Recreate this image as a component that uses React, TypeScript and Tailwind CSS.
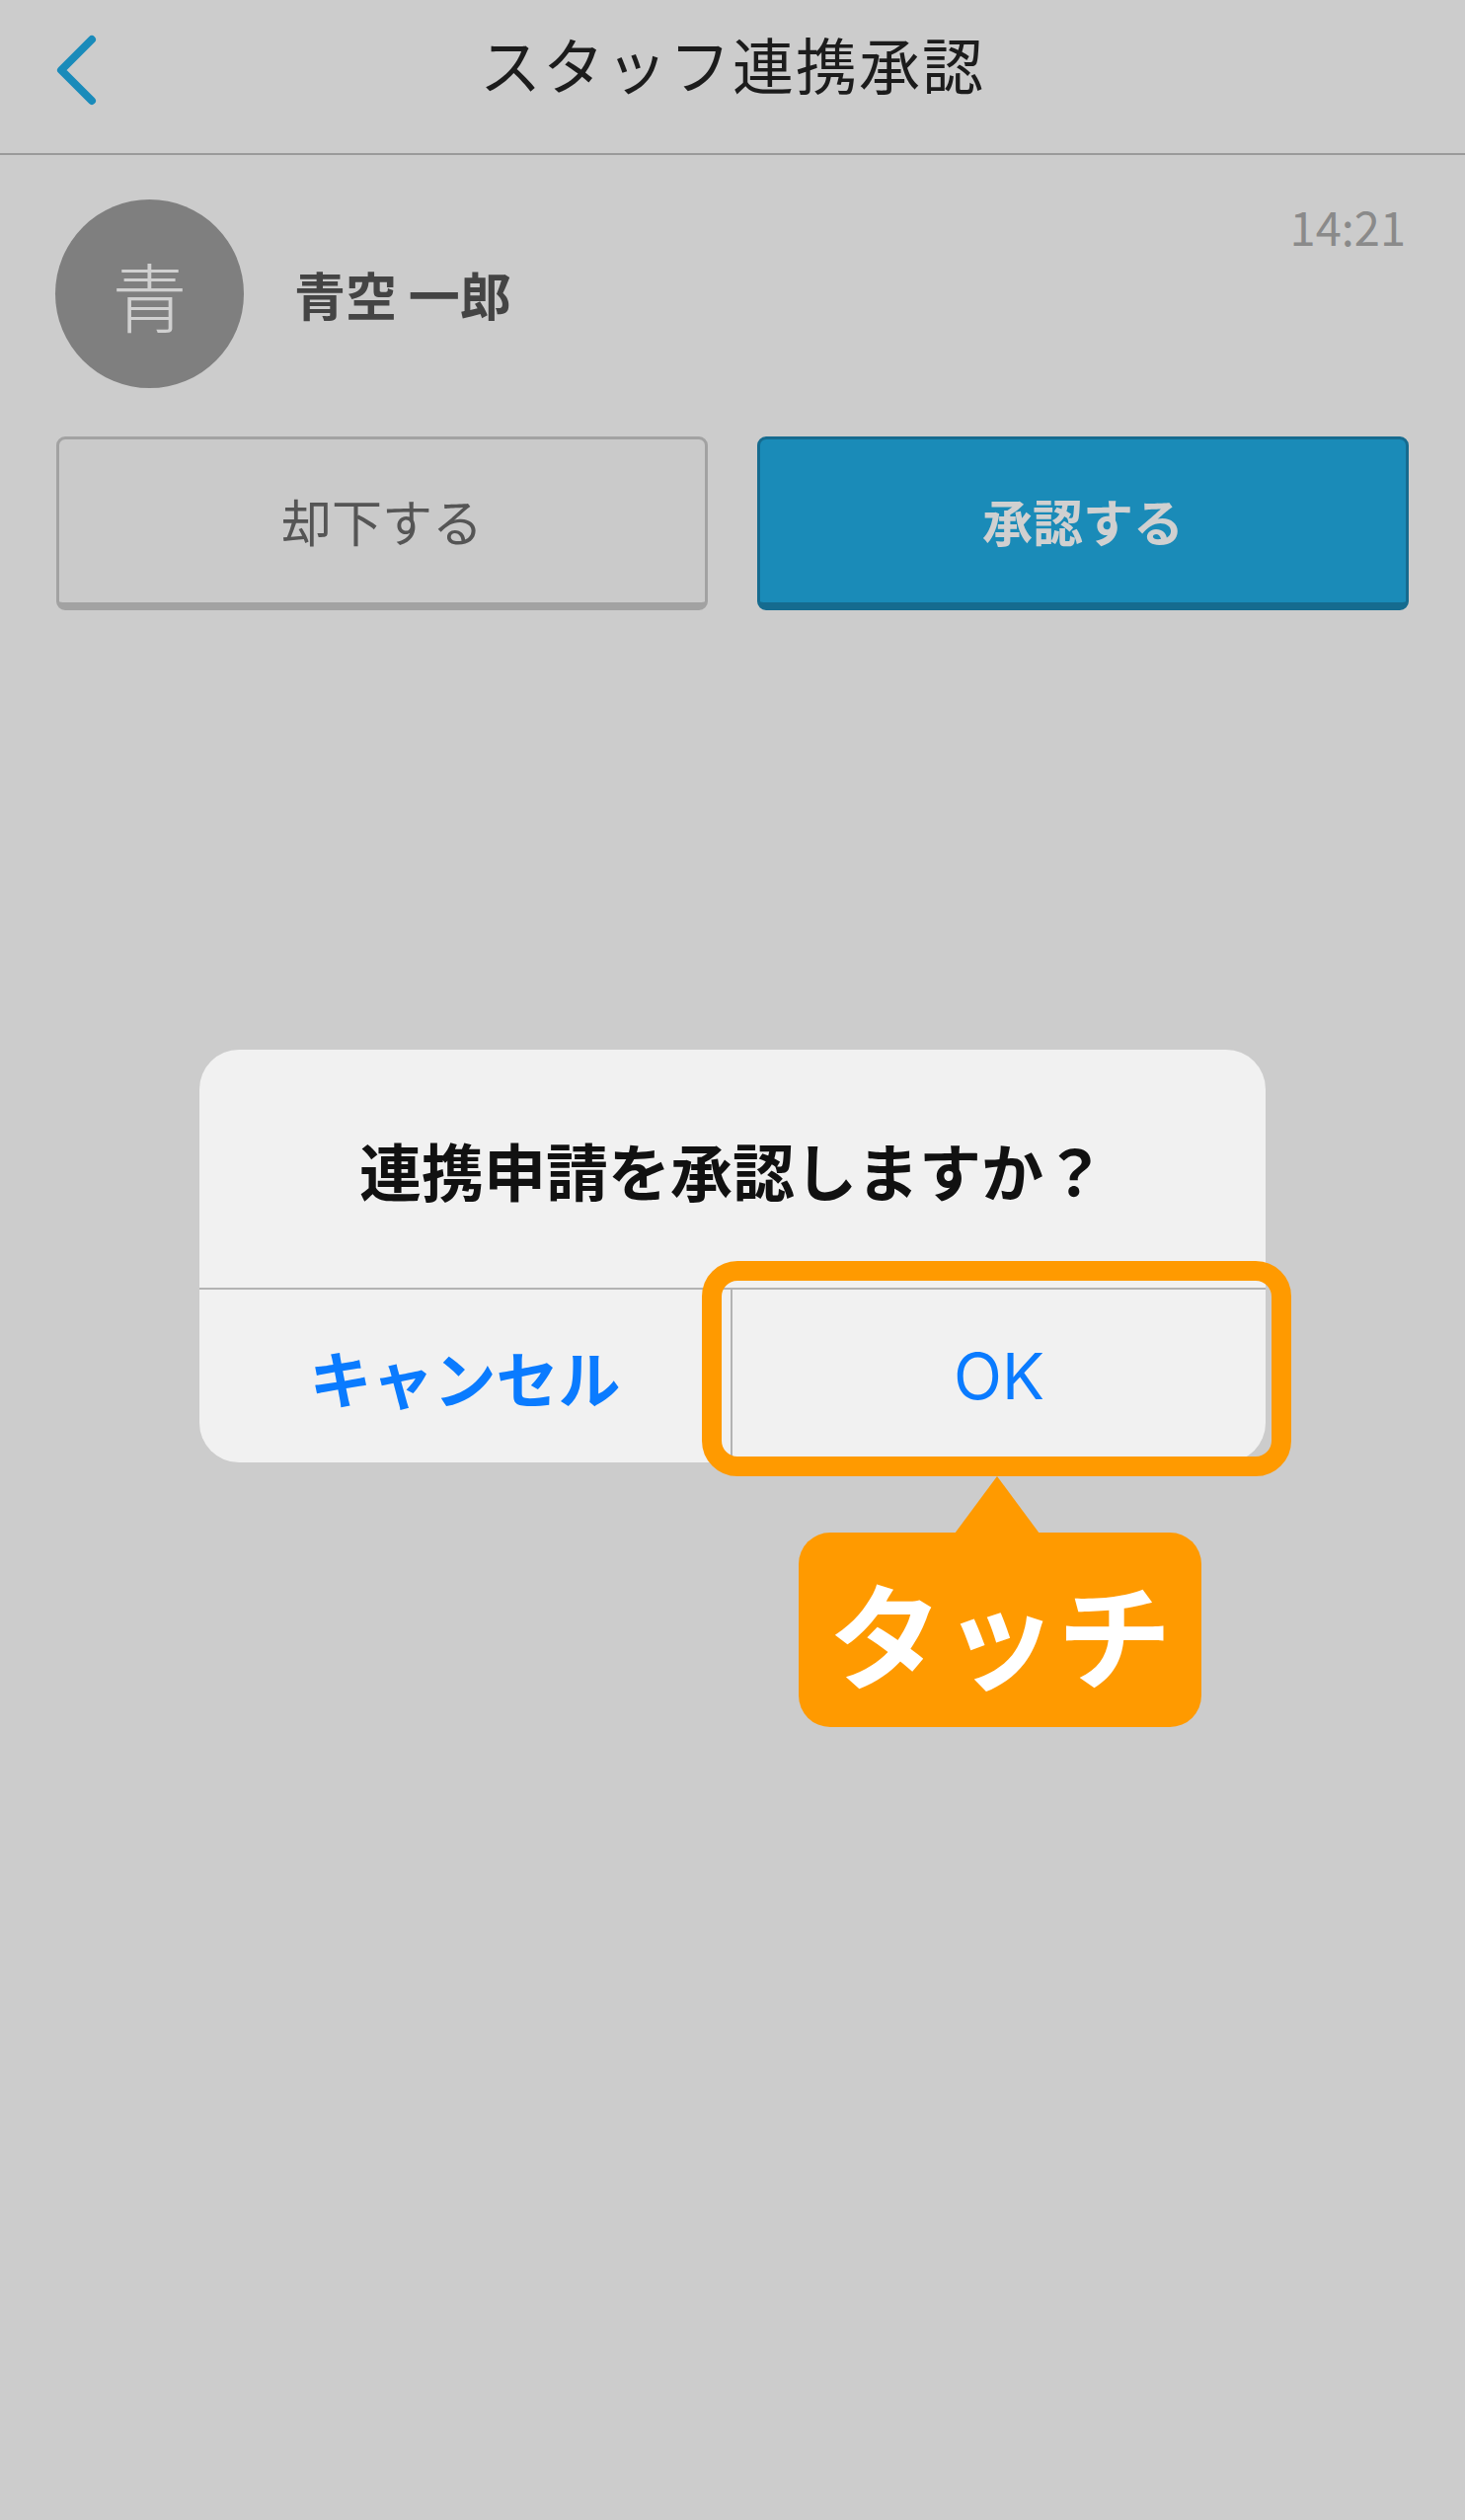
const jp = { fontFamily: '"Noto Sans CJK JP", "Noto Sans", sans-serif' };

function BackChevron() {
  return (
    <svg width="60" height="90" viewBox="0 0 60 90" className="block">
      <polyline
        points="53,17 22,48 53,79"
        fill="none"
        stroke="#1a8bba"
        strokeWidth="8"
        strokeLinecap="round"
        strokeLinejoin="round"
      />
    </svg>
  );
}

function Header() {
  return (
    <div className="h-[157px] border-b-2 border-[#9a9a9a]">
      <div className="grid h-[128px] grid-cols-[1fr_auto_1fr] items-center">
        <div className="pl-[40px] pt-[8px]">
          <BackChevron />
        </div>
        <h1 className="text-[62px] leading-none font-normal text-[#1c1c1c] tracking-[2px]">
          スタッフ連携承認
        </h1>
        <div />
      </div>
    </div>
  );
}

function StaffRow() {
  return (
    <div className="flex items-start pl-[56px] pr-[60px] pt-[45px]">
      <div className="flex h-[191px] w-[191px] shrink-0 items-center justify-center rounded-full bg-[#7f7f7f]">
        <span className="text-[76px] leading-none font-light text-[#d0d0d0]">青</span>
      </div>
      <div className="ml-[51px] flex h-[191px] items-center">
        <span className="text-[52px] leading-none font-bold text-[#444444]">青空 一郎</span>
      </div>
      <span className="ml-auto mt-[3px] text-[47px] leading-none text-[#8a8a8a]">14:21</span>
    </div>
  );
}

function ActionButtons() {
  return (
    <div className="mt-[49px] grid grid-cols-2 gap-[50px] px-[57px]">
      <button className="flex h-[176px] items-center justify-center rounded-[9px] border-[3px] border-b-[8px] border-[#a2a2a2] bg-[#cacaca] text-[51px] leading-none text-[#555555]">
        却下する
      </button>
      <button className="flex h-[176px] items-center justify-center rounded-[9px] border-[3px] border-b-[8px] border-[#156b8f] bg-[#1a8bb8] text-[51px] leading-none font-bold text-[#d0d0d0]">
        承認する
      </button>
    </div>
  );
}

function ConfirmDialog() {
  return (
    <div className="absolute left-[202px] top-[1063px] w-[1080px]">
      <div className="overflow-hidden rounded-[40px] bg-[#f1f1f1]">
        <div className="flex h-[241px] items-center justify-center">
          <p className="text-[63px] leading-none font-bold text-[#111111]">連携申請を承認しますか？</p>
        </div>
        <div className="grid h-[177px] grid-cols-2 border-t-2 border-[#b3b3b3]">
          <div className="flex items-center justify-center border-r-2 border-[#b3b3b3]">
            <span className="text-[63px] leading-none font-bold text-[#0a7bff]">キャンセル</span>
          </div>
          <div className="flex items-center justify-center">
            <span
              className="text-[64px] leading-none text-[#0a7bff]"
              style={{ fontFamily: 'Inter, "Noto Sans", sans-serif' }}
            >
              OK
            </span>
          </div>
        </div>
      </div>

      {/* annotation: highlight around OK */}
      <div className="absolute left-[509px] top-[214px] h-[218px] w-[597px] rounded-[36px] border-[20px] border-[#ff9a00]" />

      {/* annotation: callout */}
      <svg
        className="absolute left-[765px] top-[432px]"
        width="86"
        height="58"
        viewBox="0 0 86 58"
      >
        <polygon points="43,0 0,58 86,58" fill="#ff9a00" />
      </svg>
      <div className="absolute left-[607px] top-[489px] flex h-[197px] w-[408px] items-center justify-center rounded-[32px] bg-[#ff9a00]">
        <span className="text-[116px] leading-none font-bold text-white">タッチ</span>
      </div>
    </div>
  );
}

export default function App() {
  return (
    <div className="relative min-h-[2552px] w-full bg-[#cccccc]" style={jp}>
      <Header />
      <StaffRow />
      <ActionButtons />
      <ConfirmDialog />
    </div>
  );
}
